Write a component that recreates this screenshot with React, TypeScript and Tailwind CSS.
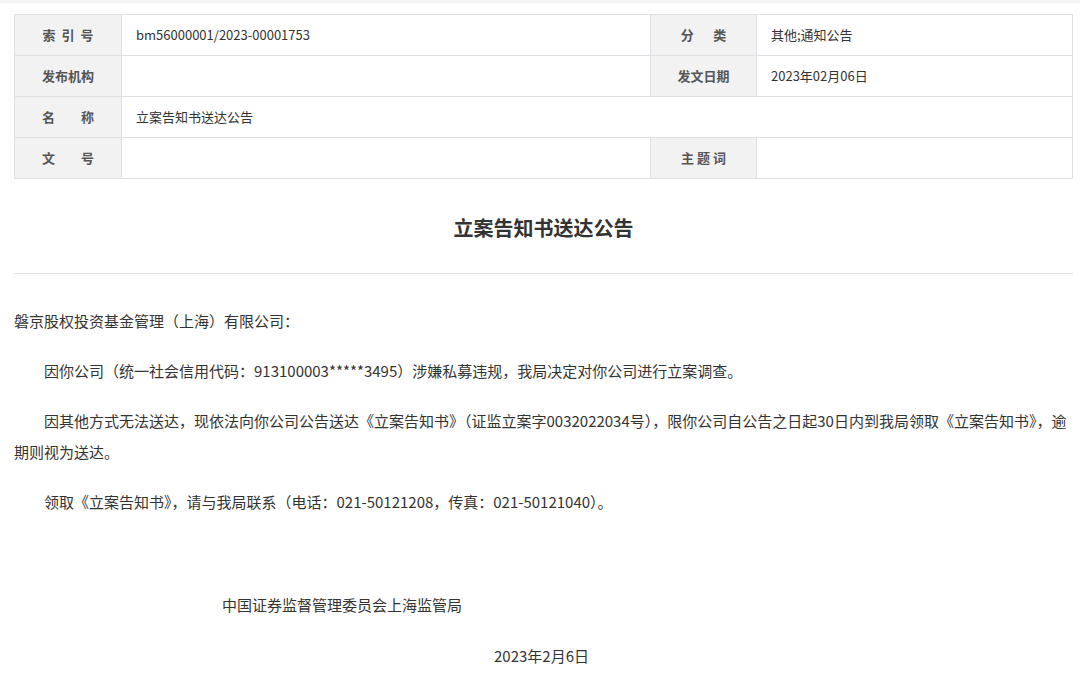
export default function App() {
  const font = { fontFamily: '"Noto Sans CJK SC", "Open Sans", sans-serif' }
  const label = 'bg-[#f2f2f2] border border-[#dde1e6] text-[13px] font-bold text-[#555] text-center align-middle h-[41px]'
  const value = 'border border-[#dde1e6] text-[13px] text-[#333] pl-[14px] align-middle'
  return (
    <div lang="zh-CN" className="w-[1080px] h-[681px] bg-white overflow-hidden border-t-[3px] border-[#f3f3f3]" style={font}>
      <div className="pl-[14px] pr-[7px] pt-[11px]">
        <table className="w-full border-collapse table-fixed">
          <colgroup>
            <col className="w-[107px]" />
            <col className="w-[529px]" />
            <col className="w-[106px]" />
            <col />
          </colgroup>
          <tbody>
            <tr>
              <td className={label}>索&nbsp;&nbsp;引&nbsp;&nbsp;号</td>
              <td className={value}>bm56000001/2023-00001753</td>
              <td className={label}>分&emsp;&ensp;类</td>
              <td className={value}>其他;通知公告</td>
            </tr>
            <tr>
              <td className={label}>发布机构</td>
              <td className={value}></td>
              <td className={label}>发文日期</td>
              <td className={value}>2023年02月06日</td>
            </tr>
            <tr>
              <td className={label}>名&emsp;&emsp;称</td>
              <td className={value} colSpan={3}>立案告知书送达公告</td>
            </tr>
            <tr>
              <td className={label}>文&emsp;&emsp;号</td>
              <td className={value}></td>
              <td className={label}>主&nbsp;题&nbsp;词</td>
              <td className={value}></td>
            </tr>
          </tbody>
        </table>
        <h1 className="text-center text-[20px] font-bold text-[#333] mt-[34px] leading-[30px]">立案告知书送达公告</h1>
        <div className="border-b border-[#e2e2e2] mt-[30px]" />
        <div className="text-[15px] text-[#333] leading-[31px] mt-[31px] pr-[0px]">
          <p>磐京股权投资基金管理（上海）有限公司：</p>
          <p className="indent-[30px] mt-[19px]">因你公司（统一社会信用代码：913100003*****3495）涉嫌私募违规，我局决定对你公司进行立案调查。</p>
          <p className="indent-[30px] mt-[19px]">因其他方式无法送达，现依法向你公司公告送达《立案告知书》（证监立案字0032022034号），限你公司自公告之日起30日内到我局领取《立案告知书》，逾期则视为送达。</p>
          <p className="indent-[30px] mt-[19px]">领取《立案告知书》，请与我局联系（电话：021-50121208，传真：021-50121040）。</p>
          <p className="pl-[208px] mt-[72px]">中国证券监督管理委员会上海监管局</p>
          <p className="pl-[480px] mt-[20px]">2023年2月6日</p>
        </div>
      </div>
    </div>
  )
}
